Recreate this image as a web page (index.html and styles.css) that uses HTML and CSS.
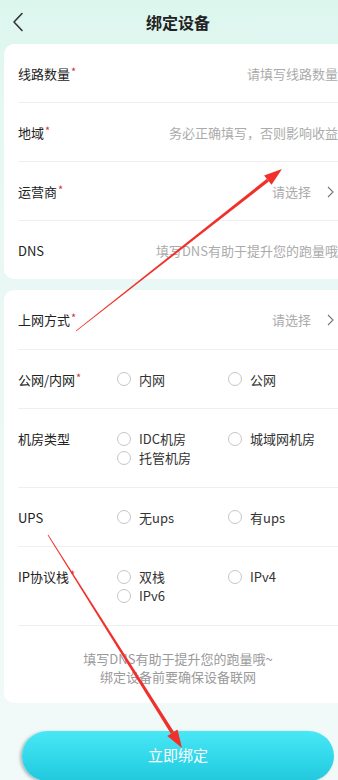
FILE: index.html
```
<!DOCTYPE html>
<html lang="zh">
<head>
<meta charset="utf-8">
<title>绑定设备</title>
<link rel="stylesheet" href="styles.css">
</head>
<body>
<div class="page">
  <header class="topbar">
    <svg class="back" width="12" height="20" viewBox="0 0 12 20"><path d="M10 1.5 L2 10 L10 18.5" fill="none" stroke="#333" stroke-width="1.6" stroke-linecap="round" stroke-linejoin="round"/></svg>
    <h1 class="title">绑定设备</h1>
  </header>

  <section class="card">
    <div class="row">
      <div class="label">线路数量<span class="req">*</span></div>
      <div class="value">请填写线路数量</div>
    </div>
    <div class="row">
      <div class="label">地域<span class="req">*</span></div>
      <div class="value">务必正确填写，否则影响收益</div>
    </div>
    <div class="row">
      <div class="label">运营商<span class="req">*</span></div>
      <div class="value select">请选择<svg class="chev" width="7" height="12" viewBox="0 0 7 12"><path d="M1 1 L6 6 L1 11" fill="none" stroke="#777" stroke-width="1.1"/></svg></div>
    </div>
    <div class="row last">
      <div class="label">DNS</div>
      <div class="value">填写DNS有助于提升您的跑量哦</div>
    </div>
  </section>

  <section class="card card2">
    <div class="row">
      <div class="label">上网方式<span class="req">*</span></div>
      <div class="value select">请选择<svg class="chev" width="7" height="12" viewBox="0 0 7 12"><path d="M1 1 L6 6 L1 11" fill="none" stroke="#777" stroke-width="1.1"/></svg></div>
    </div>
    <div class="row">
      <div class="label">公网/内网<span class="req">*</span></div>
      <div class="options">
        <div class="opt"><span class="radio"></span>内网</div>
        <div class="opt"><span class="radio"></span>公网</div>
      </div>
    </div>
    <div class="row">
      <div class="label">机房类型</div>
      <div class="options">
        <div class="opt"><span class="radio"></span>IDC机房</div>
        <div class="opt"><span class="radio"></span>城域网机房</div>
        <div class="opt"><span class="radio"></span>托管机房</div>
      </div>
    </div>
    <div class="row">
      <div class="label">UPS</div>
      <div class="options">
        <div class="opt"><span class="radio"></span>无ups</div>
        <div class="opt"><span class="radio"></span>有ups</div>
      </div>
    </div>
    <div class="row">
      <div class="label">IP协议栈<span class="req">*</span></div>
      <div class="options">
        <div class="opt"><span class="radio"></span>双栈</div>
        <div class="opt"><span class="radio"></span>IPv4</div>
        <div class="opt"><span class="radio"></span>IPv6</div>
      </div>
    </div>
    <p class="note">填写DNS有助于提升您的跑量哦~<br>绑定设备前要确保设备联网</p>
  </section>

  <button class="submit">立即绑定</button>

  <svg class="arrows" width="356" height="780" viewBox="0 0 356 780">
    <polygon points="75.75,330.69 76.25,331.31 268.84,181.38 266.86,178.86" fill="#f0302a"/>
    <polygon points="282,169 271.56,184.84 264.14,175.40" fill="#f0302a"/>
    <polygon points="47.66,535.21 48.34,534.79 173.92,731.84 170.88,733.76" fill="#f0302a"/>
    <polygon points="182,748 167.3,736.0 177.5,729.6" fill="#f0302a"/>
  </svg>
</div>
</body>
</html>
```

FILE: styles.css
```
html, body {
  margin: 0;
  padding: 0;
}
body {
  width: 338px;
  height: 780px;
  overflow: hidden;
  background: linear-gradient(180deg, #dcf6ee 0px, #e6f8f3 120px, #ecf8f6 400px, #f1faf8 780px);
  font-family: "Noto Sans CJK SC", "Noto Sans", sans-serif;
  color: #222;
}
.page {
  position: relative;
  width: 356px;
  height: 780px;
}
.topbar {
  position: relative;
  height: 44px;
  display: flex;
  align-items: center;
  justify-content: center;
}
.back {
  position: absolute;
  left: 12px;
  top: 12px;
}
.title {
  margin: 0;
  font-size: 16px;
  font-weight: 700;
  color: #222;
  line-height: 22px;
  padding-bottom: 1px;
}
.card {
  margin: 0 4px;
  background: #fff;
  border-radius: 10px;
}
.card2 {
  margin-top: 11px;
}
.row {
  margin-left: 14px;
  padding: 20px 14px 19px 0;
  border-bottom: 1px solid #efefef;
  display: flex;
  align-items: flex-start;
  font-size: 13px;
  line-height: 19px;
}
.card2 .row {
  padding-bottom: 19.5px;
}
.row.last {
  border-bottom: none;
}
.label {
  width: 99px;
  flex: none;
  height: 19px;
  color: #222;
  white-space: nowrap;
}
.req {
  position: relative;
  top: -3px;
  color: #d8312f;
  font-size: 11px;
  line-height: 0;
  margin-left: 1px;
}
.value {
  flex: 1;
  height: 19px;
  text-align: right;
  color: #ababab;
  white-space: nowrap;
}
.select {
  display: flex;
  justify-content: flex-end;
  align-items: center;
}
.chev {
  margin-left: 16px;
  margin-right: 4px;
}
.options {
  display: grid;
  grid-template-columns: 111px 111px;
}
.opt {
  display: flex;
  align-items: center;
  gap: 8px;
  height: 19px;
  color: #333;
  white-space: nowrap;
}
.radio {
  width: 12px;
  height: 12px;
  border: 1px solid #c6c6c6;
  border-radius: 50%;
  flex: none;
}
.note {
  margin: 0;
  padding: 24px 0 17px;
  text-align: center;
  font-size: 13px;
  line-height: 18px;
  color: #9a9a9a;
}
.submit {
  display: block;
  margin: 28px 22px 0;
  width: 312px;
  height: 50px;
  border: none;
  border-radius: 25px;
  background: linear-gradient(180deg, #49e7f6 0%, #2fd6e8 60%, #22c9dd 100%);
  box-shadow: -2px 1px 3px rgba(90, 110, 120, 0.45);
  color: #fff;
  font-family: "Noto Sans CJK SC", "Noto Sans", sans-serif;
  font-size: 15px;
  padding: 0 0 2px;
}
.arrows {
  position: absolute;
  left: 0;
  top: 0;
  pointer-events: none;
}
```
